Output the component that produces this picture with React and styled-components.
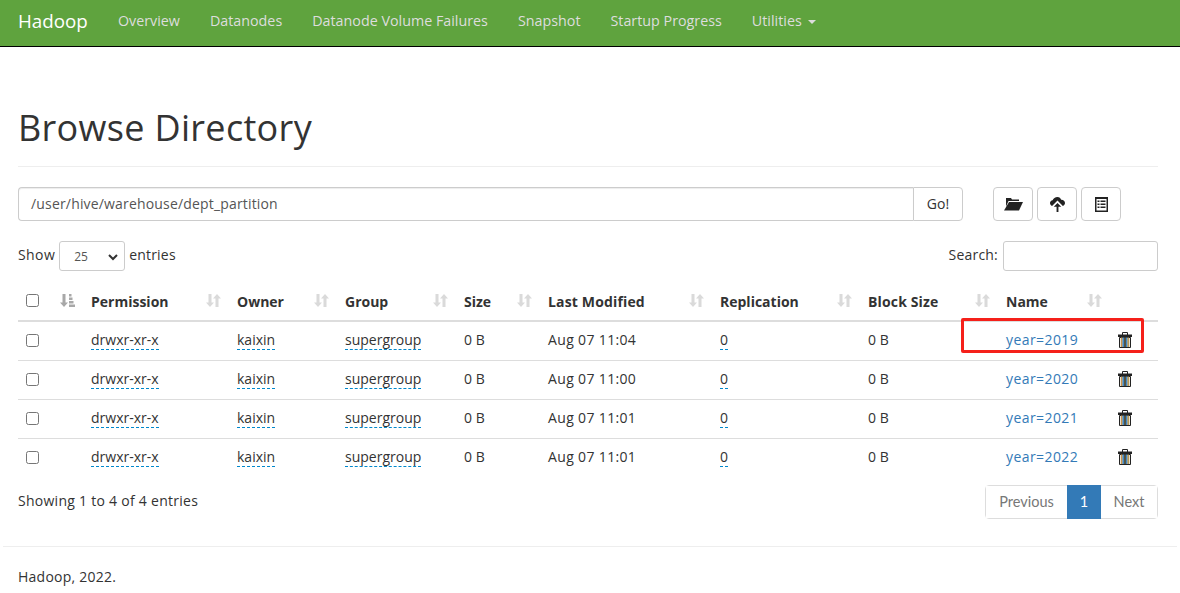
import React from 'react';
import styled, { createGlobalStyle } from 'styled-components';

const GlobalStyle = createGlobalStyle`
  html, body { margin: 0; padding: 0; background: #fff; }
  body {
    font-family: "Open Sans", "Noto Sans", sans-serif;
    font-size: 14px;
    line-height: 20px;
    color: #333;
  }
  * { box-sizing: border-box; }
`;

const Navbar = styled.nav`
  height: 47px;
  background: #5fa33e;
  border-bottom: 1px solid #000;
  display: flex;
  align-items: center;
  padding: 0 0 4px 18px;
`;

const Brand = styled.a`
  color: #fff;
  font-size: 18.8px;
  margin-right: 30px;
`;

const NavItem = styled.a`
  color: #ddd;
  font-size: 14.3px;
  margin-right: 30px;
  white-space: nowrap;
`;

const Caret = styled.span`
  display: inline-block;
  margin-left: 6px;
  vertical-align: middle;
  border-top: 4px solid #ddd;
  border-left: 4px solid transparent;
  border-right: 4px solid transparent;
`;

const Container = styled.div`
  padding: 0 22px 0 18px;
  position: relative;
`;

const Title = styled.h1`
  margin: 0;
  padding: 57px 0 14px;
  font-size: 36px;
  font-weight: 400;
  line-height: 48px;
  letter-spacing: 0.32px;
  color: #333;
  border-bottom: 1px solid #eee;
`;

const PathRow = styled.div`
  display: flex;
  margin-top: 20px;
  height: 34px;
`;

const PathGroup = styled.div`
  display: flex;
  width: 945px;
`;

const PathInput = styled.div`
  flex: 1;
  border: 1px solid #ccc;
  border-right: 0;
  border-radius: 4px 0 0 4px;
  padding: 6px 12px;
  color: #555;
  letter-spacing: 0.17px;
  box-shadow: inset 0 1px 1px rgba(0, 0, 0, 0.075);
`;

const GoButton = styled.div`
  width: 50px;
  border: 1px solid #ccc;
  border-radius: 0 4px 4px 0;
  display: flex;
  align-items: center;
  justify-content: center;
`;

const Tools = styled.div`
  display: flex;
  gap: 4px;
  margin-left: 30px;
`;

const ToolButton = styled.div`
  width: 40px;
  border: 1px solid #ccc;
  border-radius: 4px;
  display: flex;
  align-items: center;
  justify-content: center;
  color: #222;
`;

const ControlRow = styled.div`
  display: flex;
  justify-content: space-between;
  align-items: center;
  margin-top: 20px;
  height: 30px;
`;

const Label = styled.div`
  display: flex;
  align-items: center;
  gap: 4px;
`;

const LabelText = styled.span`
  margin-top: -2px;
  letter-spacing: 0.2px;
`;

const ShowText = styled(LabelText)`
  letter-spacing: 0.4px;
`;

const PageSelect = styled.div`
  width: 66px;
  height: 30px;
  border: 1px solid #ccc;
  border-radius: 3px;
  font-size: 12px;
  padding: 5px 0 0 14px;
  position: relative;
  color: #555;
  svg { position: absolute; right: 6px; top: 12px; }
`;

const SearchBox = styled.div`
  width: 155px;
  height: 30px;
  margin-left: 1px;
  border: 1px solid #ccc;
  border-radius: 3px;
`;

const Table = styled.table`
  width: 100%;
  table-layout: fixed;
  border-collapse: collapse;
  margin-top: 10px;
`;

const HeadCell = styled.th`
  position: relative;
  height: 40px;
  padding: 9px 8px 7px;
  text-align: left;
  font-weight: 700;
  letter-spacing: ${p => (p.$wide ? '0.15px' : '0')};
  border-bottom: 2px solid #ddd;
  svg { position: absolute; right: 8px; top: 12px; }
`;

const CheckHeadCell = styled(HeadCell)`
  padding: 8px;
`;

const Cell = styled.td`
  height: 39px;
  padding: 7px 8px 9px;
  letter-spacing: ${p => p.$spacing || '0'};
  border-top: ${p => (p.$first ? '0' : '1px solid #ddd')};
`;

const CheckCell = styled(Cell)`
  padding: 8px;
`;

const Box = styled.span`
  display: block;
  width: 13px;
  height: 13px;
  border: 1px solid #767676;
  border-radius: 2.5px;
  background: #fff;
`;

const Dashed = styled.span`
  border-bottom: 1px dashed #08c;
`;

const NameLink = styled.a`
  color: #337ab7;
`;

const Footer = styled.div`
  display: flex;
  justify-content: space-between;
  align-items: center;
  margin-top: 8px;
  height: 34px;
`;

const Summary = styled.span`
  margin-top: -2px;
  letter-spacing: 0.27px;
`;

const Pager = styled.div`
  display: flex;
  height: 34px;
  border: 1px solid #ddd;
  border-radius: 4px;
  font-family: Lato, "Open Sans", sans-serif;
  font-size: 14.5px;
`;

const PageItem = styled.div`
  display: flex;
  align-items: center;
  justify-content: center;
  width: ${p => p.$width}px;
  background: ${p => (p.$active ? '#337ab7' : '#fff')};
  color: ${p => (p.$active ? '#fff' : '#777')};
  margin: ${p => (p.$active ? '-1px 0' : '0')};
`;

const PageRule = styled.hr`
  margin: 27px 3px 0;
  border: 0;
  border-top: 1px solid #eee;
`;

const Copy = styled.p`
  margin: 20px 0 0 18px;
  letter-spacing: 0.25px;
`;

const Highlight = styled.div`
  position: absolute;
  left: 961px;
  top: 318px;
  width: 183px;
  height: 35px;
  border: 3px solid #f5201a;
  border-radius: 2px;
  pointer-events: none;
`;

const SortIcon = ({ active }) => (
  <svg width="15" height="15" viewBox="0 0 15 15" fill={active ? '#a8a8a8' : '#dadada'}>
    <path d="M2.5 1h3v8.5H8L4 14 0 9.500h2.500z" />
    {active ? (
      <path d="M9 1h2.500v2.500H9zM9 4.500h3.500V7H9zM9 8h4.500v2.500H9zM9 11.500h6V14H9z" />
    ) : (
      <path d="M9.500 14h3V5.500H15L11 1 7 5.500h2.500z" />
    )}
  </svg>
);

const FolderIcon = () => (
  <svg width="19" height="14" viewBox="0 0 19 14" fill="#222">
    <path d="M2 1h5l1 1.500h7V4H4.500L2 9.500z" />
    <path d="M5 5h14l-4 8.500H0z" />
  </svg>
);

const UploadIcon = () => (
  <svg width="15" height="15" viewBox="0 0 16 16" fill="#222">
    <path d="M8 0c2 0 3.400 1.200 3.900 3 2.200-.2 4.100 1.400 4.100 3.400 0 1.500-1 2.700-2.300 3.100L8 3.800 2.200 9.600C.9 9 0 7.800 0 6.500 0 4.800 1.200 3.600 2.800 3.400 3.500 1.400 5.600 0 8 0z" />
    <path d="M8 6.500l4 4H9V16H7v-5.500H4z" />
  </svg>
);

const ListIcon = () => (
  <svg width="13" height="15" viewBox="0 0 13 15">
    <rect x="0" y="0" width="13" height="15" fill="#222" />
    <rect x="1.500" y="2" width="10" height="11.500" fill="#fff" />
    <path d="M2.500 3.500h2v1.500h-2zM5.500 3.500h5v1.500h-5zM2.500 6.500h2V8h-2zM5.500 6.500h5V8h-5zM2.500 9.500h2V11h-2zM5.500 9.500h5V11h-5z" fill="#222" />
  </svg>
);

const TrashIcon = () => (
  <svg width="14" height="16" viewBox="0 0 14 16" style={{ display: 'block' }}>
    <path d="M4.500 3V.5h5V3" fill="none" stroke="#222" />
    <path d="M0 2.500h14V5H0z" fill="#222" />
    <path d="M1.500 5.500h11v10h-11z" fill="#e8e0d0" stroke="#222" />
    <path d="M3 5.500h1.500v9.500H3z" fill="#c8924a" />
    <path d="M4.500 5.500H6v9.500H4.500z" fill="#3f86c4" />
    <path d="M6 5.500h2v9.500H6z" fill="#554" />
    <path d="M8 5.500h1.500v9.500H8z" fill="#3f86c4" />
    <path d="M9.500 5.500H11v9.500H9.500z" fill="#b89a58" />
  </svg>
);

const columns = [
  { width: 65 },
  { width: 146, label: 'Permission' },
  { width: 108, label: 'Owner' },
  { width: 119, label: 'Group' },
  { width: 84, label: 'Size' },
  { width: 172, label: 'Last Modified', wide: true },
  { width: 148, label: 'Replication' },
  { width: 138, label: 'Block Size', wide: true },
  { width: 112, label: 'Name' },
  { width: 48 },
];

const rows = [
  { time: 'Aug 07 11:04', name: 'year=2019' },
  { time: 'Aug 07 11:00', name: 'year=2020' },
  { time: 'Aug 07 11:01', name: 'year=2021' },
  { time: 'Aug 07 11:01', name: 'year=2022' },
];

const navLinks = ['Overview', 'Datanodes', 'Datanode Volume Failures', 'Snapshot', 'Startup Progress'];

export default function App() {
  return (
    <>
      <GlobalStyle />
      <Navbar>
        <Brand>Hadoop</Brand>
        {navLinks.map(link => <NavItem key={link}>{link}</NavItem>)}
        <NavItem>Utilities<Caret /></NavItem>
      </Navbar>
      <Container>
        <Title>Browse Directory</Title>
        <PathRow>
          <PathGroup>
            <PathInput>/user/hive/warehouse/dept_partition</PathInput>
            <GoButton>Go!</GoButton>
          </PathGroup>
          <Tools>
            <ToolButton><FolderIcon /></ToolButton>
            <ToolButton><UploadIcon /></ToolButton>
            <ToolButton><ListIcon /></ToolButton>
          </Tools>
        </PathRow>
        <ControlRow>
          <Label>
            <ShowText>Show</ShowText>
            <PageSelect>
              25
              <svg width="10" height="7" viewBox="0 0 10 7" fill="none" stroke="#333" strokeWidth="2"><path d="M1 1l4 4 4-4" /></svg>
            </PageSelect>
            <LabelText>entries</LabelText>
          </Label>
          <Label><LabelText>Search:</LabelText><SearchBox /></Label>
        </ControlRow>
        <Table>
          <colgroup>
            {columns.map((c, i) => <col key={i} width={c.width} />)}
          </colgroup>
          <thead>
            <tr>
              <CheckHeadCell><Box /><SortIcon active /></CheckHeadCell>
              {columns.slice(1, 9).map(c => (
                <HeadCell key={c.label} $wide={c.wide}>{c.label}<SortIcon /></HeadCell>
              ))}
              <HeadCell />
            </tr>
          </thead>
          <tbody>
            {rows.map((row, i) => (
              <tr key={row.name}>
                <CheckCell $first={i === 0}><Box /></CheckCell>
                <Cell $first={i === 0}><Dashed>drwxr-xr-x</Dashed></Cell>
                <Cell $first={i === 0}><Dashed>kaixin</Dashed></Cell>
                <Cell $first={i === 0}><Dashed>supergroup</Dashed></Cell>
                <Cell $first={i === 0}>0 B</Cell>
                <Cell $first={i === 0} $spacing="0.35px">{row.time}</Cell>
                <Cell $first={i === 0}><Dashed>0</Dashed></Cell>
                <Cell $first={i === 0}>0 B</Cell>
                <Cell $first={i === 0} $spacing="0.42px"><NameLink>{row.name}</NameLink></Cell>
                <Cell $first={i === 0}><TrashIcon /></Cell>
              </tr>
            ))}
          </tbody>
        </Table>
        <Footer>
          <Summary>Showing 1 to 4 of 4 entries</Summary>
          <Pager>
            <PageItem $width={81}>Previous</PageItem>
            <PageItem $width={34} $active>1</PageItem>
            <PageItem $width={56}>Next</PageItem>
          </Pager>
        </Footer>
      </Container>
      <PageRule />
      <Copy>Hadoop, 2022.</Copy>
      <Highlight />
    </>
  );
}
